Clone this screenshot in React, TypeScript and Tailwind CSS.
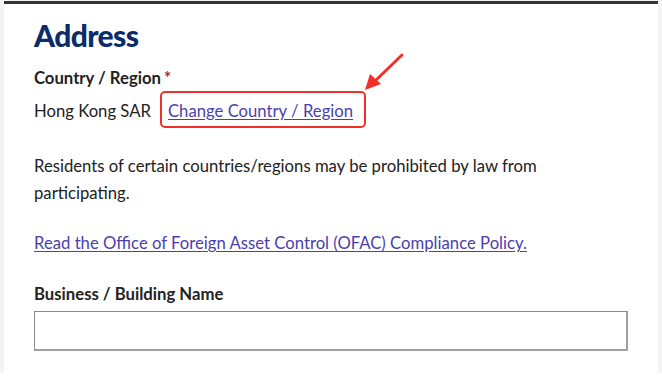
import React from "react";

export default function App() {
  return (
    <div className="w-[662px] h-[390px] bg-white overflow-hidden" style={{ fontFamily: "Lato, 'Open Sans', sans-serif" }}>
      <div className="h-[373px] bg-[#f4f4f4] px-[4px] pt-[1px]">
        <div className="relative h-full bg-white border-t-[3px] border-[#333333] px-[30px]">
          <h2 className="pt-[14px] text-[30px] leading-[34px] font-black text-[#0b2c69] tracking-[-0.6px]">Address</h2>
          <div className="mt-[16px] text-[16.7px] leading-[20px] font-bold text-[#222222]">
            Country / Region<span className="ml-[3px] text-[#b0213a] font-bold">*</span>
          </div>
          <div className="mt-[3px] flex items-center text-[16.7px] leading-[20px] text-[#222222]">
            <span className="pt-[2px]">Hong Kong SAR</span>
            <span className="ml-[9px] inline-flex items-center h-[37px] border-2 border-[#f2302a] rounded-[5px] pt-[2px] pl-[6px] pr-[11px]">
              <a className="text-[#4b3fae] underline underline-offset-2">Change Country / Region</a>
            </span>
          </div>
          <p className="mt-[25px] text-[16.7px] leading-[27px] text-[#222222] w-[580px]">
            Residents of certain countries/regions may be prohibited by law from participating.
          </p>
          <p className="mt-[23px] text-[16.7px] leading-[27px]">
            <a className="text-[#4b3fae] underline underline-offset-2">Read the Office of Foreign Asset Control (OFAC) Compliance Policy.</a>
          </p>
          <div className="mt-[27px] text-[16.7px] leading-[20px] font-bold text-[#222222]">Business / Building Name</div>
          <div className="mt-[7px] h-[40px] border border-[#8a8a8a] border-r-2 border-b-2 border-r-[#a0a0a0] border-b-[#a0a0a0] bg-white"></div>
          <svg className="absolute left-[358px] top-[47px]" width="46" height="42" viewBox="0 0 46 42">
            <line x1="40" y1="4" x2="12" y2="31" stroke="#f2302a" strokeWidth="3" strokeLinecap="round" />
            <polygon points="3,39 8,23 19,33" fill="#f2302a" />
          </svg>
        </div>
      </div>
    </div>
  );
}
